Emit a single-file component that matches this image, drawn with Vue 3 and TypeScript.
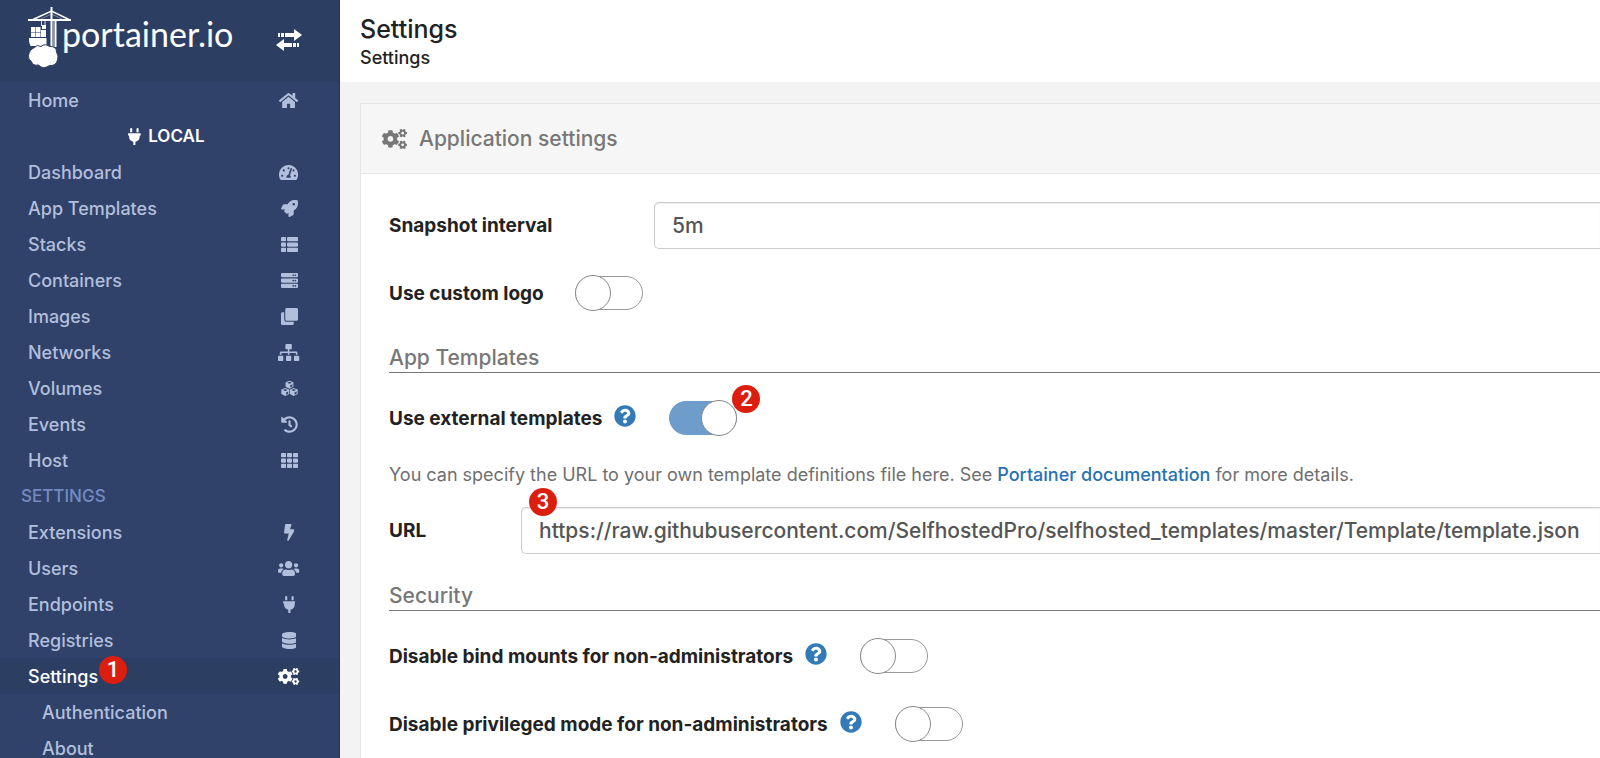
<script setup lang="ts">
import { ref } from 'vue'

interface IconShape {
  box: string
  paths: string[]
}

interface NavItem {
  label: string
  icon?: string
  kind?: 'title' | 'local' | 'sub'
  active?: boolean
  badge?: string
}

const smallGear =
  'l-8.2 14.3c-3 5.3-9.4 7.5-15.1 5.4-11.8-4.4-22.6-10.7-32.1-18.6-4.6-3.8-5.8-10.5-2.8-15.7l8.2-14.3c-6.9-8-12.3-17.3-15.9-27.4h-16.5c-6 0-11.2-4.3-12.2-10.3-2-12-2.1-24.6 0-37.1 1-6 6.2-10.4 12.2-10.4h16.5c3.6-10.1 9-19.4 15.9-27.4l-8.2-14.3c-3-5.2-1.9-11.9 2.8-15.7 9.5-7.9 20.4-14.2 32.1-18.6 5.7-2.1 12.1.1 15.1 5.4l8.2 14.3c10.5-1.9 21.2-1.9 31.7 0l8.2-14.3c3-5.3 9.4-7.5 15.1-5.4 11.8 4.4 22.6 10.7 32.1 18.6 4.6 3.8 5.8 10.5 2.8 15.7l-8.2 14.3c6.9 8 12.3 17.3 15.9 27.4h16.5c6 0 11.2 4.3 12.2 10.3 2 12 2.1 24.6 0 37.1-1 6-6.2 10.4-12.2 10.4h-16.5c-3.6 10.1-9 19.4-15.9 27.4l8.2 14.3c3 5.2 1.9 11.9-2.8 15.7-9.5 7.9-20.4 14.2-32.1 18.6-5.7 2.1-12.1-.1-15.1-5.4l-8.2-14.3c-10.4 1.9-21.2 1.9-31.7 0zm-10.5-58.8c38.5 29.6 82.4-14.3 52.8-52.8-38.5-29.7-82.4 14.3-52.8 52.8z'

const cube = (x: number, y: number): string =>
  `M${x} ${y - 128}l118 46v140l-118 58l-118-58v-140zM${x} ${y - 96}l-72 28l72 30l72-30zM${x + 24} ${y + 8}v68l64-32v-64z`

const tile = (x: number, y: number, w: number): string =>
  `M${x + 24} ${y}h${w - 48}a24 24 0 0 1 24 24v80a24 24 0 0 1-24 24h-${w - 48}a24 24 0 0 1-24-24v-80a24 24 0 0 1 24-24z`

const slab = (y: number): string =>
  `M32 ${y}h448a32 32 0 0 1 32 32v64a32 32 0 0 1-32 32h-448a32 32 0 0 1-32-32v-64a32 32 0 0 1 32-32zM432 ${y + 40}a24 24 0 1 0 .1 0zM368 ${y + 40}a24 24 0 1 0 .1 0z`

const rows = [32, 192, 352]

const icons: Record<string, IconShape> = {
  home: {
    box: '0 0 576 512',
    paths: ['M280.37 148.26L96 300.11V464a16 16 0 0 0 16 16l112.06-.29a16 16 0 0 0 15.92-16V368a16 16 0 0 1 16-16h64a16 16 0 0 1 16 16v95.64a16 16 0 0 0 16 16.05L464 480a16 16 0 0 0 16-16V300L295.67 148.26a12.19 12.19 0 0 0-15.3 0zM571.6 251.47L488 182.56V44.05a12 12 0 0 0-12-12h-56a12 12 0 0 0-12 12v72.61L318.47 43a48 48 0 0 0-61 0L4.34 251.47a12 12 0 0 0-1.6 16.9l25.5 31A12 12 0 0 0 45.15 301l235.22-193.74a12.19 12.19 0 0 1 15.3 0L530.9 301a12 12 0 0 0 16.9-1.6l25.5-31a12 12 0 0 0-1.7-16.93z'],
  },
  dashboard: {
    box: '0 0 576 512',
    paths: ['M288 32C128.94 32 0 160.94 0 320c0 52.8 14.25 102.26 39.06 144.8 5.61 9.62 16.3 15.2 27.44 15.2h443c11.14 0 21.83-5.58 27.44-15.2C561.75 422.26 576 372.8 576 320c0-159.06-128.94-288-288-288zm0 64c14.71 0 26.58 10.13 30.32 23.65-1.11 2.26-2.64 4.23-3.45 6.67l-9.22 27.67c-5.13 3.49-10.97 6.01-17.64 6.01-17.67 0-32-14.33-32-32S270.33 96 288 96zM96 384c-17.67 0-32-14.33-32-32s14.33-32 32-32 32 14.33 32 32-14.33 32-32 32zm48-160c-17.67 0-32-14.33-32-32s14.33-32 32-32 32 14.33 32 32-14.33 32-32 32zm246.77-72.41l-61.33 184C343.13 347.33 352 364.54 352 384c0 11.72-3.38 22.55-8.88 32H232.88c-5.5-9.45-8.88-20.28-8.88-32 0-33.94 26.5-61.43 59.9-63.59l61.34-184.01c4.17-12.56 17.73-19.45 30.36-15.17 12.57 4.19 19.35 17.79 15.17 30.36zm14.66 57.2l15.52-46.55c3.47-1.29 7.13-2.23 11.05-2.23 17.67 0 32 14.33 32 32s-14.33 32-32 32c-11.38-.01-20.89-6.28-26.57-15.22zM480 384c-17.67 0-32-14.33-32-32s14.33-32 32-32 32 14.33 32 32-14.33 32-32 32z'],
  },
  rocket: {
    box: '0 0 512 512',
    paths: ['M505.12 19.09c-1.19-5.53-6.66-11-12.21-12.18C460.72 0 435.51 0 410.41 0 307.18 0 245.27 55.2 199.05 128H94.84c-16.35.02-35.56 11.88-42.89 26.48L2.52 253.3A28.4 28.4 0 0 0 0 264a24 24 0 0 0 24 24h103.82l-22.48 22.47c-11.36 11.36-13 32.26 0 45.25l50.9 50.9c11.16 11.19 32.16 13.16 45.28 0L224 384.16V488a24 24 0 0 0 24 24 28.56 28.56 0 0 0 10.71-2.52l98.73-49.39c14.63-7.3 26.5-26.5 26.5-42.86V312.8C456.54 266.48 512 204.39 512 101.7c.08-25.2.08-50.4-6.88-82.61zM384.04 168A40 40 0 1 1 424.05 128 40.02 40.02 0 0 1 384.04 168z'],
  },
  list: {
    box: '0 0 512 512',
    paths: rows.flatMap((y) => [tile(0, y, 150), tile(182, y, 330)]),
  },
  server: { box: '0 0 512 512', paths: rows.map(slab) },
  clone: {
    box: '0 0 512 512',
    paths: ['M464 0c26.51 0 48 21.49 48 48v288c0 26.51-21.49 48-48 48H176c-26.51 0-48-21.49-48-48V48c0-26.51 21.49-48 48-48h288M176 416c-44.112 0-80-35.888-80-80V128H48c-26.51 0-48 21.49-48 48v288c0 26.51 21.49 48 48 48h288c26.51 0 48-21.49 48-48v-48H176z'],
  },
  sitemap: {
    box: '0 0 640 512',
    paths: ['M128 352H32c-17.67 0-32 14.33-32 32v96c0 17.67 14.33 32 32 32h96c17.67 0 32-14.33 32-32v-96c0-17.67-14.33-32-32-32zm-24-80h192v48h48v-48h192v48h48v-57.59c0-21.17-17.23-38.41-38.41-38.41H344v-64h40c17.67 0 32-14.33 32-32V32c0-17.67-14.33-32-32-32H256c-17.67 0-32 14.33-32 32v96c0 17.67 14.33 32 32 32h40v64H94.41C73.23 224 56 241.23 56 262.41V320h48v-48zm264 80h-96c-17.67 0-32 14.33-32 32v96c0 17.67 14.33 32 32 32h96c17.67 0 32-14.33 32-32v-96c0-17.67-14.33-32-32-32zm240 0h-96c-17.67 0-32 14.33-32 32v96c0 17.67 14.33 32 32 32h96c17.67 0 32-14.33 32-32v-96c0-17.67-14.33-32-32-32z'],
  },
  cubes: { box: '0 0 512 512', paths: [cube(256, 148), cube(128, 366), cube(384, 366)] },
  history: {
    box: '0 0 512 512',
    paths: ['M504 255.531c.253 136.64-111.18 248.372-247.82 248.468-59.015.042-113.223-20.53-155.822-54.911-11.077-8.94-11.905-25.541-1.839-35.607l11.267-11.267c8.609-8.609 22.353-9.551 31.891-1.984C173.062 425.135 212.781 440 256 440c101.705 0 184-82.311 184-184 0-101.705-82.311-184-184-184-48.814 0-93.149 18.969-126.068 49.932l50.754 50.754c10.08 10.08 2.941 27.314-11.313 27.314H24c-8.837 0-16-7.163-16-16V38.627c0-14.254 17.234-21.393 27.314-11.314l49.372 49.372C129.209 34.136 189.552 8 256 8c136.81 0 247.747 110.78 248 247.531zm-180.912 78.784l9.823-12.63c8.138-10.463 6.253-25.542-4.21-33.679L288 256.349V152c0-13.255-10.745-24-24-24h-16c-13.255 0-24 10.745-24 24v135.651l65.409 50.874c10.463 8.137 25.541 6.253 33.679-4.21z'],
  },
  grid: {
    box: '0 0 512 512',
    paths: rows.flatMap((y) => [tile(0, y, 150), tile(181, y, 150), tile(362, y, 150)]),
  },
  bolt: {
    box: '0 0 320 512',
    paths: ['M296 160H180.6l42.6-129.8C227.2 15 215.7 0 200 0H56C44 0 33.8 8.9 32.2 20.8l-32 240C-1.7 275.2 9.5 288 24 288h118.7L96.6 482.5c-3.6 15.2 8 29.5 23.3 29.5 8.4 0 16.4-4.4 20.8-12l176-304c9.3-15.9-2.2-36-20.7-36z'],
  },
  users: {
    box: '0 0 640 512',
    paths: ['M96 224c35.3 0 64-28.7 64-64s-28.7-64-64-64-64 28.7-64 64 28.7 64 64 64zm448 0c35.3 0 64-28.7 64-64s-28.7-64-64-64-64 28.7-64 64 28.7 64 64 64zm32 32h-64c-17.6 0-33.5 7.1-45.1 18.6 40.3 22.1 68.9 62 75.1 109.4h66c17.7 0 32-14.3 32-32v-32c0-35.3-28.7-64-64-64zm-256 0c61.9 0 112-50.1 112-112S381.9 32 320 32 208 82.1 208 144s50.1 112 112 112zm76.8 32h-8.3c-20.8 10-43.9 16-68.5 16s-47.6-6-68.5-16h-8.3C179.6 288 128 339.6 128 403.2V432c0 26.5 21.5 48 48 48h288c26.5 0 48-21.5 48-48v-28.8c0-63.6-51.6-115.2-115.2-115.2zm-223.7-13.4C161.5 263.1 145.6 256 128 256H64c-35.3 0-64 28.7-64 64v32c0 17.7 14.3 32 32 32h65.9c6.3-47.4 34.9-87.3 75.2-109.4z'],
  },
  plug: {
    box: '0 0 384 512',
    paths: ['M320 32a32 32 0 0 0-64 0v96h64zm48 128H16a16 16 0 0 0-16 16v32a16 16 0 0 0 16 16h16v32a160.07 160.07 0 0 0 128 156.8V512h64v-99.2A160.07 160.07 0 0 0 352 256v-32h16a16 16 0 0 0 16-16v-32a16 16 0 0 0-16-16zM128 32a32 32 0 0 0-64 0v96h64z'],
  },
  database: {
    box: '0 0 448 512',
    paths: ['M448 73.143v45.714C448 159.143 347.667 192 224 192S0 159.143 0 118.857V73.143C0 32.857 100.333 0 224 0s224 32.857 224 73.143zM448 176v102.857C448 319.143 347.667 352 224 352S0 319.143 0 278.857V176c48.125 33.143 136.208 48.572 224 48.572S399.874 209.143 448 176zm0 160v102.857C448 479.143 347.667 512 224 512S0 479.143 0 438.857V336c48.125 33.143 136.208 48.572 224 48.572S399.874 369.143 448 336z'],
  },
  cogs: {
    box: '0 0 640 512',
    paths: [
      `M512.1 191${smallGear}`,
      `M512.1 489.9${smallGear}`,
      'M386.3 286.1l33.7 16.8c10.1 5.8 14.5 18.1 10.5 29.1-8.9 24.2-26.4 46.4-42.6 65.8-7.4 8.9-20.2 11.1-30.3 5.3l-29.1-16.8c-16 13.7-34.6 24.6-54.9 31.7v33.6c0 11.6-8.3 21.6-19.7 23.6-24.6 4.2-50.4 4.4-75.9 0-11.5-2-20-11.9-20-23.6V418c-20.3-7.2-38.9-18-54.9-31.7L74 403c-10 5.8-22.9 3.6-30.3-5.3-16.2-19.4-33.3-41.6-42.2-65.7-4-10.9.4-23.2 10.5-29.1l33.3-16.8c-3.9-20.9-3.9-42.4 0-63.4L12 205.8c-10.1-5.8-14.6-18.1-10.5-29 8.9-24.2 26-46.4 42.2-65.8 7.4-8.9 20.2-11.1 30.3-5.3l29.1 16.8c16-13.7 34.6-24.6 54.9-31.7V57.1c0-11.5 8.2-21.5 19.6-23.5 24.6-4.2 50.5-4.4 76-.1 11.5 2 20 11.9 20 23.6v33.6c20.3 7.2 38.9 18 54.9 31.7l29.1-16.8c10-5.8 22.9-3.6 30.3 5.3 16.2 19.4 33.2 41.6 42.1 65.8 4 10.9.1 23.2-10 29.1l-33.7 16.8c3.9 21 3.9 42.5 0 63.5zm-117.6 21.1c59.2-77-28.7-164.9-105.7-105.7-59.2 77 28.7 164.9 105.7 105.7z',
    ],
  },
}

const helpPath =
  'M504 256c0 136.997-111.043 248-248 248S8 392.997 8 256C8 119.083 119.043 8 256 8s248 111.083 248 248zM262.655 90c-54.497 0-89.255 22.957-116.549 63.758-3.536 5.286-2.353 12.415 2.715 16.258l34.699 26.31c5.205 3.947 12.621 3.008 16.665-2.122 17.864-22.658 30.113-35.797 57.303-35.797 20.429 0 45.698 13.148 45.698 32.958 0 14.976-12.363 22.667-32.534 33.976C247.128 238.528 216 254.941 216 296v4c0 6.627 5.373 12 12 12h56c6.627 0 12-5.373 12-12v-1.333c0-28.462 83.186-29.647 83.186-106.667 0-58.002-60.165-102-116.531-102zM256 338c-25.365 0-46 20.635-46 46 0 25.364 20.635 46 46 46s46-20.636 46-46c0-25.365-20.635-46-46-46z'

const nav: NavItem[] = [
  { label: 'Home', icon: 'home' },
  { label: 'LOCAL', icon: 'plug', kind: 'local' },
  { label: 'Dashboard', icon: 'dashboard' },
  { label: 'App Templates', icon: 'rocket' },
  { label: 'Stacks', icon: 'list' },
  { label: 'Containers', icon: 'server' },
  { label: 'Images', icon: 'clone' },
  { label: 'Networks', icon: 'sitemap' },
  { label: 'Volumes', icon: 'cubes' },
  { label: 'Events', icon: 'history' },
  { label: 'Host', icon: 'grid' },
  { label: 'SETTINGS', kind: 'title' },
  { label: 'Extensions', icon: 'bolt' },
  { label: 'Users', icon: 'users' },
  { label: 'Endpoints', icon: 'plug' },
  { label: 'Registries', icon: 'database' },
  { label: 'Settings', icon: 'cogs', active: true, badge: '1' },
  { label: 'Authentication', kind: 'sub' },
  { label: 'About', kind: 'sub' },
]

const snapshotInterval = ref('5m')
const customLogo = ref(false)
const externalTemplates = ref(true)
const templatesUrl = ref(
  'https://raw.githubusercontent.com/SelfhostedPro/selfhosted_templates/master/Template/template.json',
)
const security = ref([
  { id: 'bind-mounts', label: 'Disable bind mounts for non-administrators', on: false },
  { id: 'privileged', label: 'Disable privileged mode for non-administrators', on: false },
])
</script>

<template>
  <div class="page">
    <aside class="sidebar">
      <div class="brand">
        <a class="logo" href="#" aria-label="portainer.io">
          <svg class="crane" viewBox="0 0 46 62" aria-hidden="true">
            <g fill="none" stroke="#fff">
              <path d="M0 13H43" stroke-width="2" />
              <path d="M23.500 0V40M27.500 14V40" stroke-width="2" />
              <path d="M25.500 14V40" stroke-width="1" stroke-opacity=".45" />
              <path d="M5 12.500L23.500 4L41 12.500" stroke-width="1.500" />
              <path d="M11 13L23.500 7L36 13" stroke-width=".7" stroke-opacity=".5" />
              <path d="M13.500 13V19M17 13V19" stroke-width="1" stroke-opacity=".8" />
            </g>
            <path fill="#fff" d="M14 18h4v4h-4zM3 20h4.500v5H3zM8 20h4.500v5H8zM3 25.600h4.500V30H3zM8 25.600h4.500V30H8zM13 23h5v7h-5zM1 31h17.500v8H2.500Q.5 35 1 31z" />
            <path fill="#fff" stroke="#2d3e63" stroke-width="1" d="M6.500 40.500Q9 37 13 39.500Q17 36 21.500 39.500Q28.500 39 28.500 45Q31 49 29.500 53Q28 59 21.500 58.500Q15 63 10.500 58Q4.500 59 3.500 54.500Q0 53 .5 48.500Q1 43 6.500 40.500z" />
          </svg>
          <span class="logo-name">portainer.io</span>
        </a>
        <button class="collapse" type="button" aria-label="Toggle sidebar">
          <svg viewBox="0 0 26 22" aria-hidden="true">
            <path fill="#fff" d="M2 4h2v4H2zM5 4h3v4H5zM9 4h9V0l8 6-8 6V8H9zM23 14h-2v4h2zM20 14h-3v4h3zM16 14H8v-4L0 16l8 6v-4h8z" />
          </svg>
        </button>
      </div>
      <nav>
        <ul class="nav">
          <li v-for="item in nav" :key="item.label + item.kind">
            <span v-if="item.kind === 'title'" class="nav-title">{{ item.label }}</span>
            <a v-else href="#" :class="['nav-link', item.kind, { active: item.active }]">
              <svg v-if="item.icon && item.kind === 'local'" class="icon" :viewBox="icons[item.icon].box" aria-hidden="true">
                <path v-for="d in icons[item.icon].paths" :key="d" :d="d" />
              </svg>
              <span class="nav-label">{{ item.label }}<b v-if="item.badge" class="badge badge-nav">{{ item.badge }}</b></span>
              <span v-if="item.icon && item.kind !== 'local'" class="icon-slot">
                <svg class="icon" :viewBox="icons[item.icon].box" aria-hidden="true">
                  <path v-for="d in icons[item.icon].paths" :key="d" :d="d" />
                </svg>
              </span>
            </a>
          </li>
        </ul>
      </nav>
    </aside>

    <main class="content">
      <header class="page-header">
        <h1>Settings</h1>
        <p>Settings</p>
      </header>

      <section class="widget">
        <h2 class="widget-header">
          <svg class="icon" :viewBox="icons.cogs.box" aria-hidden="true">
            <path v-for="d in icons.cogs.paths" :key="d" :d="d" />
          </svg>
          Application settings
        </h2>
        <form class="widget-body" @submit.prevent>
          <div class="row interval-row">
            <label for="interval">Snapshot interval</label>
            <input id="interval" v-model="snapshotInterval" class="field" type="text" />
          </div>
          <div class="row toggle-row">
            <label for="custom-logo">Use custom logo</label>
            <input id="custom-logo" v-model="customLogo" class="switch" type="checkbox" />
          </div>

          <h3>App Templates</h3>
          <div class="row toggle-row">
            <label for="external">Use external templates</label>
            <button class="help" type="button" aria-label="Help">
              <svg viewBox="0 0 512 512" aria-hidden="true"><path :d="helpPath" /></svg>
            </button>
            <span class="switch-wrap">
              <input id="external" v-model="externalTemplates" class="switch" type="checkbox" />
              <b class="badge badge-switch">2</b>
            </span>
          </div>
          <p class="hint">
            You can specify the URL to your own template definitions file here. See
            <a href="#">Portainer documentation</a> for more details.
          </p>
          <div class="row url-row">
            <label for="url">URL</label>
            <div class="field-wrap">
              <input id="url" v-model="templatesUrl" class="field" type="text" />
              <b class="badge badge-field">3</b>
            </div>
          </div>

          <h3>Security</h3>
          <div v-for="option in security" :key="option.id" class="row toggle-row">
            <label :for="option.id">{{ option.label }}</label>
            <button class="help" type="button" aria-label="Help">
              <svg viewBox="0 0 512 512" aria-hidden="true"><path :d="helpPath" /></svg>
            </button>
            <input :id="option.id" v-model="option.on" class="switch" type="checkbox" />
          </div>
        </form>
      </section>
    </main>
  </div>
</template>

<style>
body {
  margin: 0;
  overflow: hidden;
}
</style>

<style scoped>
.page {
  display: flex;
  height: 100vh;
  overflow: hidden;
  background: #f3f3f3;
  color: #222;
  font-family: Inter, 'Open Sans', sans-serif;
  font-size: 18px;
  font-weight: 500;
}
.page * {
  box-sizing: border-box;
}
.sidebar {
  flex: 0 0 340px;
  background: #30426a;
  border-right: 1px solid #1f3565;
}
.brand {
  display: flex;
  align-items: flex-start;
  height: 82px;
  padding: 7px 37px 0 28px;
  background: #2d3e63;
}
.logo {
  display: flex;
  flex: 1;
  color: #fff;
  text-decoration: none;
}
.crane {
  flex: none;
  width: 46px;
  height: 62px;
  margin-right: -12px;
}
.logo-name {
  font-family: Lato, sans-serif;
  font-size: 34px;
  font-weight: 400;
  line-height: 54px;
}
.collapse {
  width: 26px;
  height: 22px;
  margin-top: 22px;
  padding: 0;
  border: 0;
  background: none;
}
.collapse svg {
  display: block;
}
.nav {
  margin: 0;
  padding: 0;
  list-style: none;
}
.nav-link,
.nav-title {
  display: flex;
  align-items: center;
  height: 36px;
  padding: 0 34px 0 28px;
  color: #b2bfdc;
  text-decoration: none;
}
.nav-title {
  padding-left: 21px;
  color: #738bc0;
  font-size: 17px;
}
.nav-link.active {
  background: #2d3e63;
  color: #fff;
}
.nav-link.local {
  justify-content: center;
  gap: 7px;
  padding: 0 6px 0 0;
  color: #fff;
  font-size: 17px;
  font-weight: 600;
}
.nav-link.sub {
  padding-left: 42px;
}
.nav-label {
  position: relative;
}
.icon-slot {
  display: flex;
  justify-content: center;
  width: 32px;
  margin-left: auto;
}
.icon {
  height: 17px;
  fill: currentColor;
  fill-rule: evenodd;
}
.badge {
  position: absolute;
  width: 28px;
  height: 28px;
  border-radius: 50%;
  background: #dc1e0e;
  color: #fff;
  font-family: Roboto, sans-serif;
  font-size: 22px;
  font-weight: 500;
  line-height: 28px;
  text-align: center;
}
.badge-nav {
  top: -10px;
  left: 71px;
}
.badge-switch {
  top: -16px;
  left: 63px;
}
.badge-field {
  top: -19px;
  left: 8px;
}
.content {
  flex: 1;
  min-width: 0;
}
.page-header {
  height: 82px;
  padding: 14px 20px;
  background: #fff;
}
h1,
h2,
h3,
p {
  margin: 0;
  font-weight: 500;
}
h1 {
  font-size: 25px;
  line-height: 30px;
}
.page-header p {
  line-height: 28px;
}
.widget {
  margin: 21px 0 0 20px;
  border: 1px solid #e6e6e6;
  border-right: 0;
  background: #fff;
}
.widget-header {
  display: flex;
  align-items: center;
  gap: 12px;
  height: 70px;
  padding: 0 21px;
  border-bottom: 1px solid #e6e6e6;
  background: #f6f6f6;
  color: #777;
  font-size: 21px;
}
.widget-header .icon {
  height: 20px;
}
.widget-body {
  padding: 28px 0 28px 28px;
}
.row {
  display: flex;
  align-items: center;
}
.row label {
  font-size: 19px;
  font-weight: 700;
}
.interval-row {
  margin-bottom: 26px;
}
.interval-row label {
  width: 265px;
}
.url-row label {
  width: 132px;
}
.field,
.field-wrap {
  flex: 1;
  min-width: 0;
}
.field-wrap {
  position: relative;
}
.field {
  width: 100%;
  height: 47px;
  padding: 0 0 0 17px;
  border: 1px solid #ccc;
  border-right: 0;
  border-radius: 5px 0 0 5px;
  background: #fff;
  box-shadow: inset 0 1px 1px rgba(0, 0, 0, 0.08);
  color: #555;
  font: inherit;
  font-size: 21px;
  outline: 0;
}
.toggle-row {
  height: 36px;
  margin-bottom: 32px;
}
.switch-wrap {
  position: relative;
  display: flex;
}
.switch {
  position: relative;
  width: 68px;
  height: 34px;
  margin: 0;
  border: 1px solid #999;
  border-radius: 17px;
  background: #fff;
  appearance: none;
}
.switch::before {
  content: '';
  position: absolute;
  top: -2px;
  left: -1px;
  width: 36px;
  height: 36px;
  box-sizing: border-box;
  border: 1px solid #888;
  border-radius: 50%;
  background: #fff;
}
.switch:checked {
  border-color: #6f9dcb;
  background: #6f9dcb;
}
.switch:checked::before {
  left: 31px;
}
label + .switch {
  margin-left: 31px;
}
.help {
  width: 22px;
  height: 22px;
  margin: 0 33px 5px 12px;
  padding: 0;
  border: 0;
  background: none;
}
.help svg {
  display: block;
  fill: #337ab7;
}
h3 {
  height: 30px;
  margin-bottom: 27px;
  border-bottom: 1px solid #777;
  color: #777;
  font-size: 21px;
  line-height: 30px;
}
.hint {
  margin: -5px 0 20px;
  color: #6f6f6f;
  font-weight: 400;
  line-height: 24px;
}
.hint a {
  color: #2572b4;
  font-weight: 500;
  text-decoration: none;
}
.url-row {
  margin-bottom: 27px;
}
</style>
